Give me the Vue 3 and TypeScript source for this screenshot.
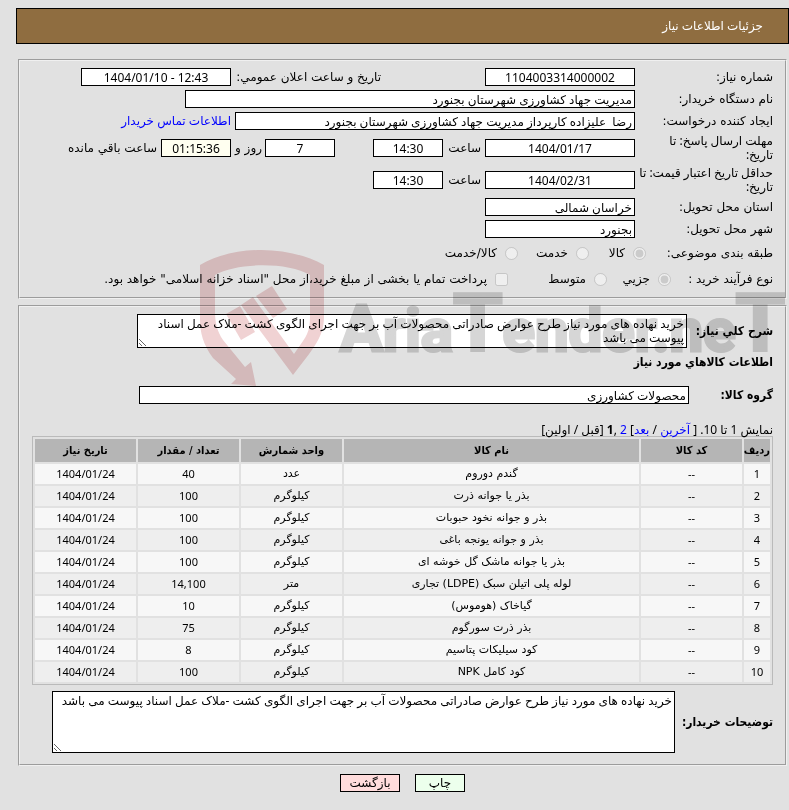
<script setup lang="ts">
interface Item {
  row: number
  code: string
  name: string
  unit: string
  amount: string
  date: string
}

const description =
  'خرید نهاده های مورد نیاز طرح عوارض صادراتی محصولات آب بر جهت اجرای الگوی کشت -ملاک عمل اسناد پیوست می باشد'

const date = '1404/01/24'
const items: Item[] = [
  { row: 1, code: '--', name: 'گندم دوروم', unit: 'عدد', amount: '40', date },
  { row: 2, code: '--', name: 'بذر یا جوانه ذرت', unit: 'کیلوگرم', amount: '100', date },
  { row: 3, code: '--', name: 'بذر و جوانه نخود حبوبات', unit: 'کیلوگرم', amount: '100', date },
  { row: 4, code: '--', name: 'بذر و جوانه یونجه باغی', unit: 'کیلوگرم', amount: '100', date },
  { row: 5, code: '--', name: 'بذر یا جوانه ماشک گل خوشه ای', unit: 'کیلوگرم', amount: '100', date },
  { row: 6, code: '--', name: 'لوله پلی اتیلن سبک (LDPE) تجاری', unit: 'متر', amount: '14,100', date },
  { row: 7, code: '--', name: 'گیاخاک (هوموس)', unit: 'کیلوگرم', amount: '10', date },
  { row: 8, code: '--', name: 'بذر ذرت سورگوم', unit: 'کیلوگرم', amount: '75', date },
  { row: 9, code: '--', name: 'کود سیلیکات پتاسیم', unit: 'کیلوگرم', amount: '8', date },
  { row: 10, code: '--', name: 'کود کامل NPK', unit: 'کیلوگرم', amount: '100', date },
]
</script>

<template>
  <div class="page" dir="rtl">
    <header class="title-bar"><h1>جزئیات اطلاعات نیاز</h1></header>

    <section class="panel first">
      <div class="line">
        <label class="caption" for="need-no">شماره نیاز:</label>
        <input id="need-no" class="w150 mid" value="1104003314000002" readonly />
        <label class="announce" for="announced">تاریخ و ساعت اعلان عمومي:</label>
        <input id="announced" class="w150 mid" dir="ltr" value="1404/01/10 - 12:43" readonly />
      </div>
      <div class="line">
        <label class="caption" for="buyer">نام دستگاه خریدار:</label>
        <input id="buyer" class="w450" value="مدیریت جهاد کشاورزی شهرستان بجنورد" readonly />
      </div>
      <div class="line">
        <label class="caption" for="creator">ایجاد کننده درخواست:</label>
        <input id="creator" class="w400" value="رضا  علیزاده کارپرداز مدیریت جهاد کشاورزی شهرستان بجنورد" readonly />
        <a class="after" href="#">اطلاعات تماس خریدار</a>
      </div>
      <div class="line tall">
        <label class="caption" for="reply-date">مهلت ارسال پاسخ: تا<br />تاریخ:</label>
        <input id="reply-date" class="w150 mid" value="1404/01/17" readonly />
        <label class="hour" for="reply-time">ساعت</label>
        <input id="reply-time" class="w70 mid" value="14:30" readonly />
        <input class="w70 mid days" aria-label="روز" value="7" readonly />
        <span class="and">روز و</span>
        <input id="left" class="w70 mid remain" value="01:15:36" readonly />
        <label class="after" for="left">ساعت باقي مانده</label>
      </div>
      <div class="line tall">
        <label class="caption" for="price-date">حداقل تاریخ اعتبار قیمت: تا<br />تاریخ:</label>
        <input id="price-date" class="w150 mid" value="1404/02/31" readonly />
        <label class="hour" for="price-time">ساعت</label>
        <input id="price-time" class="w70 mid" value="14:30" readonly />
      </div>
      <div class="line">
        <label class="caption" for="province">استان محل تحویل:</label>
        <input id="province" class="w150" value="خراسان شمالی" readonly />
      </div>
      <div class="line">
        <label class="caption" for="city">شهر محل تحویل:</label>
        <input id="city" class="w150" value="بجنورد" readonly />
      </div>
      <div class="line choices" role="radiogroup" aria-label="طبقه بندی موضوعی">
        <span class="kind">طبقه بندی موضوعی:</span>
        <label class="opt o-goods"><input type="radio" name="kind" checked disabled />کالا</label>
        <label class="opt o-service"><input type="radio" name="kind" disabled />خدمت</label>
        <label class="opt"><input type="radio" name="kind" disabled />کالا/خدمت</label>
      </div>
      <div class="line choices" role="group" aria-label="نوع فرآیند خرید">
        <span class="process">نوع فرآیند خرید :</span>
        <label class="opt o-small"><input type="radio" name="process" checked disabled />جزیي</label>
        <label class="opt o-medium"><input type="radio" name="process" disabled />متوسط</label>
        <label class="opt"><input type="checkbox" disabled />پرداخت تمام یا بخشی از مبلغ خرید،از محل "اسناد خزانه اسلامی" خواهد بود.</label>
      </div>
    </section>

    <section class="panel second">
      <div class="line summary">
        <label class="strong" for="summary">شرح کلي نیاز:</label>
        <textarea id="summary" class="w550" :value="description" readonly></textarea>
      </div>
      <h2>اطلاعات کالاهاي مورد نیاز</h2>
      <div class="line group">
        <label class="strong" for="group">گروه کالا:</label>
        <input id="group" class="w550" value="محصولات کشاورزی" readonly />
      </div>
      <p class="paging">نمایش 1 تا 10. [ <a href="#">آخرین</a> / <a href="#">بعد</a>] <a href="#">2</a> ,<b>1</b> [قبل / اولین]</p>
      <table>
        <colgroup>
          <col class="c-row" /><col class="c-mid" /><col /><col class="c-mid" /><col class="c-mid" /><col class="c-mid" />
        </colgroup>
        <thead>
          <tr>
            <th>ردیف</th><th>کد کالا</th><th>نام کالا</th><th>واحد شمارش</th><th>تعداد / مقدار</th><th>تاریخ نیاز</th>
          </tr>
        </thead>
        <tbody>
          <tr v-for="item in items" :key="item.row">
            <td>{{ item.row }}</td>
            <td>{{ item.code }}</td>
            <td class="words">{{ item.name }}</td>
            <td class="words">{{ item.unit }}</td>
            <td>{{ item.amount }}</td>
            <td>{{ item.date }}</td>
          </tr>
        </tbody>
      </table>
      <div class="line comment">
        <label class="strong" for="comment">توضیحات خریدار:</label>
        <textarea id="comment" :value="description" readonly></textarea>
      </div>
    </section>

    <div class="actions">
      <button type="button" class="print">چاپ</button>
      <button type="button" class="back">بازگشت</button>
    </div>

    <svg class="watermark" width="592" height="140" viewBox="0 0 592 140" direction="ltr" aria-hidden="true">
      <g fill="#f0d2d3">
        <path d="M2 16C36-4 90-4 126 16V66C126 86 120 94 95 126L43 56L55 48L96 105L105 92C112 82 112 76 112 62V26C90 13 40 13 17 26V62C17 74 19 82 25 91L47 118L53 113L58 137L33 135L38 130L15 109C5 95 2 84 2 70Z" />
        <path d="M28 65L42 57L57 83L43 91Z" />
        <path d="M58 47L74 37L89 60L75 69Z" />
      </g>
      <text class="brand" x="142" y="102"><tspan class="first-cap">A</tspan>ria<tspan class="cap">T</tspan>ender.ne<tspan class="cap">T</tspan></text>
    </svg>
  </div>
</template>

<style>
body {
  background: #e1e1e1;
}
</style>

<style scoped>
.page {
  position: relative;
  padding: 8px 0 17px 16px;
  background: #e1e1e1;
  color: #000;
  font: 12px/14px "Noto Sans", "DejaVu Sans", Tahoma, sans-serif;
  overflow: hidden;
}
.page * {
  box-sizing: border-box;
}
.title-bar {
  display: flex;
  align-items: center;
  height: 36px;
  padding: 0 25px;
  border: 1px solid #000;
  background: #8f6d40;
  color: #fff;
}
h1 {
  margin: 0;
  font-size: 12px;
  font-weight: normal;
}
.panel {
  margin: 15px 2px 0;
  padding: 5px 12px;
  border: 2px groove #f0f0f0;
}
.first .line > label,
.first .line > span,
.words {
  font-family: "DejaVu Sans", Tahoma, sans-serif;
}
.first .tall > .caption {
  font-family: "Noto Sans", "DejaVu Sans", Tahoma, sans-serif;
}
.second {
  margin-top: 6px;
  padding: 7px 12px 11px;
}
.line {
  display: flex;
  align-items: center;
  min-height: 22px;
}
.tall {
  min-height: 32px;
}
.caption {
  flex: none;
  width: 138px;
  white-space: nowrap;
}
input,
textarea {
  flex: none;
  margin: 0;
  padding: 0 2px;
  border: 1px solid #000;
  border-radius: 0;
  background: #fff;
  color: #000;
  font: inherit;
}
input {
  height: 18px;
}
input[type='radio'],
input[type='checkbox'] {
  width: 13px;
  height: 13px;
}
.mid {
  text-align: center;
}
.w70 { width: 70px; }
.w150 { width: 150px; }
.w400 { width: 400px; }
.w450 { width: 450px; }
.w550 { width: 550px; }
.announce {
  width: 150px;
  margin-right: 104px;
  white-space: nowrap;
}
.after {
  margin-right: 4px;
}
.hour {
  width: 42px;
  padding-right: 4px;
}
.days {
  margin-right: 38px;
}
.and {
  width: 34px;
  padding-right: 3px;
  white-space: nowrap;
}
.remain {
  background: #fffff0;
}
a {
  color: #00f;
  text-decoration: none;
}
.choices {
  min-height: 26px;
  white-space: nowrap;
}
.kind {
  width: 127px;
}
.process {
  width: 102px;
}
.opt {
  display: flex;
  align-items: center;
  gap: 8px;
}
.o-goods { width: 57px; }
.o-service { width: 71px; }
.o-small { width: 64px; }
.o-medium { width: 99px; }
.strong,
h2,
th {
  font-family: "DejaVu Sans Condensed", "DejaVu Sans", Tahoma, sans-serif;
  font-weight: bold;
}
h2 {
  margin: 7px 0 15px;
  font-size: 12px;
}
textarea {
  padding: 2px;
  line-height: 14px;
  resize: both;
  overflow: hidden;
}
.summary {
  gap: 4px;
}
.summary textarea {
  height: 34px;
}
.summary .strong {
  width: 82px;
  white-space: nowrap;
}
.group .strong {
  width: 84px;
}
.paging {
  margin: 18px 0 0;
  line-height: 12px;
}
table {
  width: 100%;
  table-layout: fixed;
  border: 1px solid #bababa;
  border-spacing: 2px;
  font-size: 11px;
  text-align: center;
}
.c-row { width: 26px; }
.c-mid { width: 101px; }
th,
td {
  padding: 0;
  height: 20px;
  overflow: hidden;
  white-space: nowrap;
}
th {
  height: 23px;
  background: #b5b5b5;
}
tbody tr {
  background: #f7f7f7;
}
tbody tr:nth-child(even) {
  background: #eee;
}
.comment {
  margin-top: 6px;
}
.comment .strong {
  width: 98px;
  white-space: nowrap;
}
.comment textarea {
  flex: 0 1 623px;
  height: 62px;
}
.actions {
  display: flex;
  justify-content: center;
  gap: 15px;
  margin-top: 8px;
}
button {
  height: 18px;
  padding: 0;
  border: 1px solid #000;
  color: #000;
  font: inherit;
}
.print {
  width: 50px;
  background: #ecffec;
}
.back {
  width: 60px;
  background: #ffdcdc;
}
.watermark {
  position: absolute;
  top: 249px;
  left: 198px;
  mix-blend-mode: multiply;
  pointer-events: none;
}
.brand {
  fill: #d6d6d6;
  stroke: #d6d6d6;
  stroke-width: 3px;
  font: bold 60px Roboto, "Liberation Sans", sans-serif;
}
.first-cap {
  font-size: 64px;
}
.cap {
  font-size: 80px;
}
</style>
